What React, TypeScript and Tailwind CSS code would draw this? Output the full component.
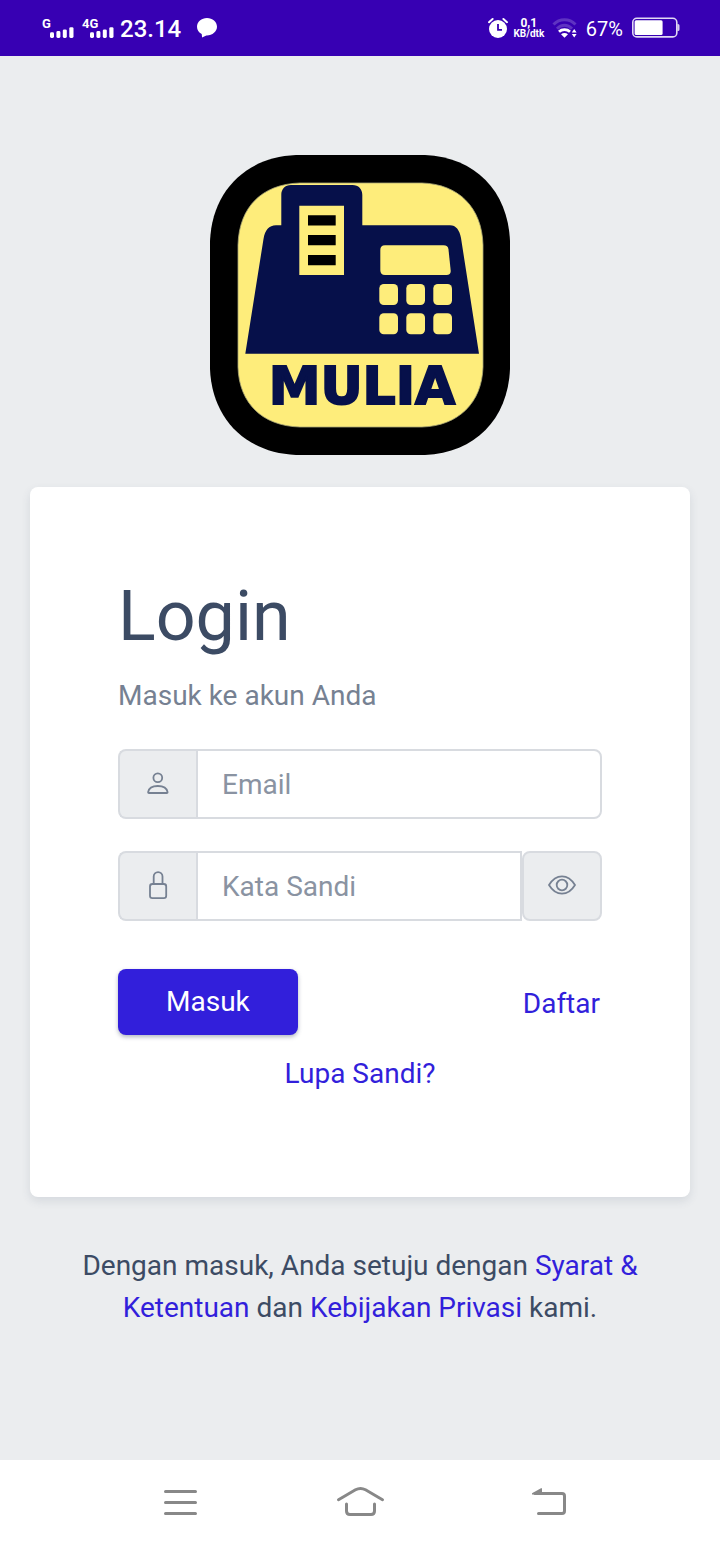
import { useState } from "react";

function SignalBars() {
  return (
    <svg width="24" height="12" viewBox="0 0 24 12" fill="#fff" aria-hidden="true">
      <rect x="0" y="5.300" width="4" height="5.700" rx="1.400" />
      <rect x="6.400" y="4" width="4" height="7" rx="1.400" />
      <rect x="12.800" y="2.400" width="4" height="8.600" rx="1.400" />
      <rect x="19.300" y="0.200" width="4.200" height="10.800" rx="1.400" />
    </svg>
  );
}

function Signal({ label }: { label: string }) {
  return (
    <div className="flex w-8 flex-col">
      <span className="text-[13px] leading-[14px] font-bold">{label}</span>
      <div className="-mt-1 ml-2">
        <SignalBars />
      </div>
    </div>
  );
}

function StatusBar() {
  return (
    <header className="flex h-14 items-center justify-between bg-[#3700b3] pr-10 pl-[42px] text-white">
      <div className="flex items-center">
        <Signal label="G" />
        <div className="ml-2">
          <Signal label="4G" />
        </div>
        <span className="mt-0.5 ml-1.5 text-[24px] leading-7 font-medium">23.14</span>
        <svg className="ml-4" width="20" height="20" viewBox="0 0 20 20" fill="#fff" aria-hidden="true">
          <path d="M10 0C4.500 0 0 3.900 0 8.800c0 3.100 1.800 5.700 4.700 7.300l0.400 3.500 4.200-2.200c6 0.200 10.700-3.700 10.700-8.600C20 3.900 15.500 0 10 0z" />
        </svg>
      </div>
      <div className="flex items-center">
        <svg width="20" height="22" viewBox="0 0 20 22" aria-hidden="true">
          <path d="M1 5.200 4.600 2M19 5.200 15.400 2" stroke="#fff" strokeWidth="2" strokeLinecap="round" />
          <circle cx="10" cy="12" r="9" fill="#fff" />
          <path d="M10 7v5.800h4" fill="none" stroke="#3700b3" strokeWidth="1.800" />
        </svg>
        <div className="ml-1.5 flex w-[30px] flex-col items-center font-bold">
          <span className="text-[12px] leading-[11px]">0,1</span>
          <span className="text-[10px] leading-[10px]">KB/dtk</span>
        </div>
        <svg className="ml-2" width="26" height="22" viewBox="0 0 26 22" fill="none" aria-hidden="true">
          <path d="M1.500 7.500C7.500 1.200 17.500 1.200 23.500 7.500M5 11.800C9.500 7.200 15.500 7.200 20 11.800" stroke="#fff" strokeOpacity="0.200" strokeWidth="3" />
          <path d="M7 14.800C10 12 15 12 18 14.800" stroke="#fff" strokeWidth="2.800" />
          <path d="M9 17.200C11.300 15.700 13.700 15.700 16 17.200L12.500 20.800z" fill="#fff" />
          <path d="M22.200 12 24.600 15.500H19.800zM22.200 20.500 24.600 17H19.800z" fill="#fff" />
        </svg>
        <span className="mt-0.5 ml-2 text-[20px] leading-6">67%</span>
        <svg className="ml-[9px]" width="48" height="22" viewBox="0 0 48 22" fill="none" aria-hidden="true">
          <rect x="0.800" y="1.300" width="44" height="18.600" rx="4" stroke="#fff" strokeOpacity="0.850" strokeWidth="1.600" />
          <rect x="2.600" y="3.200" width="28" height="14.900" rx="1.500" fill="#fff" />
          <path d="M45.500 7h.5a1.500 1.500 0 0 1 1.500 1.500v4a1.500 1.500 0 0 1-1.500 1.500h-.5z" fill="#fff" fillOpacity="0.800" />
        </svg>
      </div>
    </header>
  );
}

function Logo() {
  return (
    <svg width="300" height="300" viewBox="0 0 300 300" role="img" aria-label="MULIA">
      <path d="M86 0H215C265 2 298 36 300 86V214C298 264 265 298 215 300H86C36 298 2 264 0 214V86C2 36 36 2 86 0z" fill="#000" />
      <path d="M90 28H212C248 29 272 52 273 90V212C272 248 248 271 212 272H90C52 271 29 248 28 212V90C29 52 52 29 90 28z" fill="#feed7b" stroke="#a9a777" strokeWidth="0.800" />
      <path
        d="M35.300 198.700 53.500 84C55 75 59 70.300 66 70.300H71.300V40C71.300 34 75 30 81 30H142.500C148.500 30 152.300 34 152.300 40V70.300H240C246 70.300 249.500 75 251 83L269 198.700z"
        fill="#06104a"
      />
      <path d="M89.300 50.700H134V120H89.300z" fill="#feed7b" />
      <path d="M98 60.300h27.700v10.300H98zM98 80h27.700v10.300H98zM98 100h27.700v10.300H98z" fill="#000" />
      <g fill="#feed7b">
        <path d="M175 90.300H233.500Q238 90.300 238.500 94.500L240.700 115.500Q241 120 236.500 120H175Q170.300 120 170.300 115V95Q170.300 90.300 175 90.300z" />
        {[129, 158.3].map((y) =>
          [169.3, 196.3, 223.3].map((x) => (
            <rect key={`${x}-${y}`} x={x} y={y} width="18.700" height="21" rx="4.500" />
          )),
        )}
      </g>
      <text
        x="152"
        y="249"
        textAnchor="middle"
        fontSize="52"
        fill="#06104a"
        stroke="#06104a"
        strokeWidth="2"
        className="font-['DejaVu_Sans',sans-serif] font-bold"
      >
        MULIA
      </text>
    </svg>
  );
}

function UserIcon() {
  return (
    <svg width="28" height="28" viewBox="0 0 28 28" fill="none" stroke="#768192" strokeWidth="1.800" aria-hidden="true">
      <circle cx="13.800" cy="7.800" r="4.400" />
      <path d="M5 23C4.300 23 4.100 22.600 4.100 22.200C4.800 18.300 8.400 16 13.800 16S22.900 18.300 23.600 22.200C23.600 22.600 23.400 23 22.800 23z" strokeLinejoin="round" />
    </svg>
  );
}

function LockIcon() {
  return (
    <svg width="28" height="30" viewBox="0 0 28 30" fill="none" stroke="#768192" strokeWidth="1.800" aria-hidden="true">
      <rect x="6" y="13" width="16.200" height="14.200" rx="2.400" />
      <path d="M9.700 13V5.500a4.400 4.400 0 0 1 8.800 0V13" />
    </svg>
  );
}

function EyeIcon() {
  return (
    <svg width="28" height="28" viewBox="0 0 28 28" fill="none" stroke="#768192" strokeWidth="1.800" aria-hidden="true">
      <path d="M1 13C4.500 7.200 9 4.300 14 4.300S23.500 7.200 27 13C23.500 18.800 19 21.700 14 21.700S4.500 18.800 1 13z" strokeLinejoin="round" />
      <circle cx="14" cy="13" r="5.300" />
    </svg>
  );
}

const addon =
  "flex h-[70px] w-[78px] shrink-0 items-center justify-center rounded-l-lg border-2 border-r-0 border-[#d8dbe0] bg-[#ebedef]";
const field =
  "h-[70px] w-full min-w-0 flex-1 border-2 border-[#d8dbe0] bg-white px-6 text-[28px] text-[#5c6873] outline-none placeholder:text-[#8a93a2]";
const link = "text-[#321fdb]";

function LoginForm() {
  const [visible, setVisible] = useState(false);
  return (
    <form
      className="rounded-lg bg-white px-[88px] pt-[88px] pb-[102px] shadow-[0_4px_10px_rgba(60,75,100,0.12)]"
      onSubmit={(e) => e.preventDefault()}
    >
      <h1 className="text-[70px] leading-[82px]">Login</h1>
      <p className="mt-[18px] text-[#768192]">Masuk ke akun Anda</p>
      <div className="mt-8 flex">
        <label htmlFor="email" aria-label="Email" className={addon}>
          <UserIcon />
        </label>
        <input id="email" type="email" placeholder="Email" className={`${field} rounded-r-lg`} />
      </div>
      <div className="mt-8 flex">
        <label htmlFor="password" aria-label="Kata Sandi" className={addon}>
          <LockIcon />
        </label>
        <input id="password" type={visible ? "text" : "password"} placeholder="Kata Sandi" className={field} />
        <button
          type="button"
          aria-label="Tampilkan sandi"
          onClick={() => setVisible(!visible)}
          className="flex h-[70px] w-20 shrink-0 items-center justify-center rounded-lg border-2 border-[#d8dbe0] bg-[#ebedef]"
        >
          <EyeIcon />
        </button>
      </div>
      <div className="mt-12 flex items-start justify-between">
        <button
          type="submit"
          className="rounded-lg bg-[#321fdb] px-12 py-3 text-white shadow-[0_2px_4px_rgba(60,75,100,0.4)]"
        >
          Masuk
        </button>
        <a href="#daftar" className={`${link} px-0.5 py-3.5`}>
          Daftar
        </a>
      </div>
      <div className="mt-3.5 text-center">
        <a href="#lupa-sandi" className={link}>
          Lupa Sandi?
        </a>
      </div>
    </form>
  );
}

function NavBar() {
  const button = "flex h-12 w-[54px] items-center justify-center";
  return (
    <nav className="flex h-[84px] items-center justify-center gap-[126px] bg-white">
      <button type="button" aria-label="Menu" className={button}>
        <svg width="54" height="36" viewBox="0 0 54 36" fill="none" stroke="#888" strokeWidth="3" strokeLinecap="round" aria-hidden="true">
          <path d="M12.500 7.500h30M12.500 18.500h30M12.500 29.500h30" />
        </svg>
      </button>
      <button type="button" aria-label="Beranda" className={button}>
        <svg width="54" height="36" viewBox="0 0 54 36" fill="none" stroke="#888" strokeWidth="3" strokeLinecap="round" aria-hidden="true">
          <path d="M5.500 15.700 22.500 5.800Q27.500 3 32.500 5.800L49.500 15.700" />
          <path d="M13.500 20v7q0 3.500 3.500 3.500h21q3.500 0 3.500-3.500v-7" />
        </svg>
      </button>
      <button type="button" aria-label="Kembali" className={button}>
        <svg width="54" height="36" viewBox="0 0 54 36" fill="none" stroke="#888" strokeWidth="3" strokeLinecap="round" aria-hidden="true">
          <path d="M22 9.500H49Q51.500 9.500 51.500 12V27Q51.500 29.500 49 29.500H25.500" />
          <path d="M19 10.500V9.300L28 4.300H29V10.500z" fill="#888" stroke="none" />
        </svg>
      </button>
    </nav>
  );
}

export default function App() {
  return (
    <div className="flex min-h-screen flex-col bg-[#ebedef] font-['Roboto',sans-serif] text-[28px] leading-[42px] text-[#3c4b64]">
      <StatusBar />
      <main className="flex flex-1 flex-col justify-center px-[30px]">
        <div className="mb-8 flex justify-center">
          <Logo />
        </div>
        <LoginForm />
        <p className="mt-12 mb-8 px-[30px] text-center">
          Dengan masuk, Anda setuju dengan{" "}
          <a href="#syarat" className={link}>
            Syarat &amp; Ketentuan
          </a>{" "}
          dan{" "}
          <a href="#privasi" className={link}>
            Kebijakan Privasi
          </a>{" "}
          kami.
        </p>
      </main>
      <NavBar />
    </div>
  );
}
